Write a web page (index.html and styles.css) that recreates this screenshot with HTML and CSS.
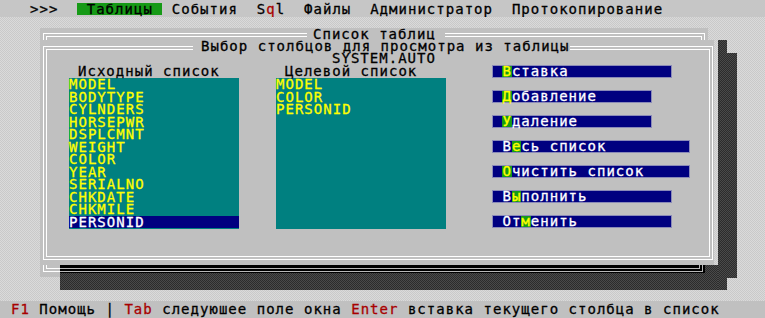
FILE: index.html
```html
<!DOCTYPE html>
<html lang="ru">

<head>
    <meta charset="UTF-8">
    <meta name="viewport" content="width=device-width, initial-scale=1.0">
    <title>Список таблиц</title>
    <link rel="stylesheet" href="styles.css">
</head>

<body>

    <div class="screen">
        <div class="menubar">&gt;&gt;&gt;  <span class="menu-active"> Таблицы </span> События  S<span class="key">q</span>l  Файлы  Администратор  Протокопирование</div>

        <div class="desk">
            <!-- back window -->
            <div class="win win-back">
                <span class="win-title title-back">Список таблиц</span>
            </div>

            <!-- shadows -->
            <div class="shade shade-back-right"></div>
            <div class="shade shade-front-right"></div>
            <div class="shade shade-bottom"></div>
            <div class="shade-black"></div>

            <!-- front window -->
            <div class="win win-front">
                <span class="win-title title-front">Выбор столбцов для просмотра из таблицы</span>
                <div class="table-name">SYSTEM.AUTO</div>

                <div class="win-body">
                    <div class="lists">
                        <div class="list-col">
                            <div class="list-label">Исходный список</div>
                            <ul class="list-box">
                                <li>MODEL</li>
                                <li>BODYTYPE</li>
                                <li>CYLNDERS</li>
                                <li>HORSEPWR</li>
                                <li>DSPLCMNT</li>
                                <li>WEIGHT</li>
                                <li>COLOR</li>
                                <li>YEAR</li>
                                <li>SERIALNO</li>
                                <li>CHKDATE</li>
                                <li>CHKMILE</li>
                                <li class="selected">PERSONID</li>
                            </ul>
                        </div>
                        <div class="list-col">
                            <div class="list-label">Целевой список</div>
                            <ul class="list-box">
                                <li>MODEL</li>
                                <li>COLOR</li>
                                <li>PERSONID</li>
                            </ul>
                        </div>
                    </div>

                    <div class="buttons">
                        <div class="btn w19"> <span class="hot">В</span>ставка</div>
                        <div class="btn w17"> <span class="hot">Д</span>обавление</div>
                        <div class="btn w17"> <span class="hot">У</span>даление</div>
                        <div class="btn w21"> В<span class="hot">е</span>сь список</div>
                        <div class="btn w21"> <span class="hot">О</span>чистить список</div>
                        <div class="btn w19"> В<span class="hot">ы</span>полнить</div>
                        <div class="btn w19"> От<span class="hot">м</span>енить</div>
                    </div>
                </div>
            </div>
        </div>

        <div class="statusbar"><span class="key">F1</span> Помощь | <span class="key">Tab</span> следуюшее поле окна <span class="key">Enter</span> вставка текущего столбца в список</div>
    </div>

</body>

</html>
```

FILE: styles.css
```css
* {
    box-sizing: border-box;
}

body {
    margin: 0;
    background: #c0c0c0;
}

.screen {
    width: 765px;
    height: 318px;
    display: flex;
    flex-direction: column;
    overflow: hidden;
    font-family: "DejaVu Sans Mono", monospace;
    font-size: 14px;
    line-height: 12px;
    letter-spacing: 1.02px; /* one text cell = 9.45px */
    -webkit-text-stroke: 0.3px currentColor; /* bitmap font is a bit heavier */
    color: #000;
}

.key {
    color: #a80000;
}

/* top menu */
.menubar {
    flex: none;
    height: 17px;
    padding: 3px 0 0 30px;
    background: #c6c6c6;
    white-space: pre;
}

.menu-active {
    display: inline-block;
    height: 12px;
    background: #169a16;
}

/* desktop with the windows */
.desk {
    flex: 1;
    position: relative;
    background: repeating-conic-gradient(#c9c9c9 0 25%, #dadada 0 50%) 0 0 / 2px 2px;
}

.win {
    position: absolute;
    background: #c0c0c0;
}

.win::before {
    content: "";
    position: absolute;
    border: 4px double #fff;
}

.win-title {
    position: absolute;
    top: 0;
    background: #c0c0c0;
    white-space: pre;
    z-index: 1;
}

.win-back {
    left: 40px;
    top: 11px;
    width: 668px;
    height: 249px;
}

.win-back::before {
    top: 5px;
    left: 3px;
    right: 3px;
    bottom: 5px;
}

.title-back {
    left: 267px;
    padding: 0 9px 0 6px;
}

.shade {
    position: absolute;
    background: repeating-conic-gradient(#2c2c2c 0 25%, #4a4a4a 0 50%) 0 0 / 2px 2px;
}

.shade-back-right {
    left: 718px;
    top: 23px;
    width: 9px;
    height: 250px;
}

.shade-front-right {
    left: 727px;
    top: 36px;
    width: 10px;
    height: 225px;
}

.shade-bottom {
    left: 60px;
    top: 248px;
    width: 658px;
    height: 25px;
}

.shade-black {
    position: absolute;
    left: 60px;
    top: 248px;
    width: 645px;
    height: 8px;
    background: #000;
}

.shade-black::after {
    content: "";
    position: absolute;
    left: 0;
    right: 2px;
    top: -12px;
    bottom: 1px;
    border-right: 4px double #b8b8b8;
    border-bottom: 4px double #b8b8b8;
}

.win-front {
    left: 40px;
    top: 23px;
    width: 674px;
    height: 225px;
    padding: 12px 0 0 29px;
}

.win-front::before {
    top: 6px;
    left: 3px;
    right: 1px;
    bottom: 5px;
}

.title-front {
    left: 153px;
    padding-left: 8px;
}

.table-name {
    padding-left: 263px;
}

.win-body {
    display: flex;
    margin-top: 1px;
}

.lists {
    display: flex;
    gap: 37px;
}

.list-col {
    width: 170px;
}

.list-label {
    line-height: 13px;
    padding-left: 9px;
    white-space: pre;
}

.list-box {
    list-style: none;
    margin: 0;
    padding: 0;
    height: 151px;
    background: #008080;
    color: #ffff00;
    line-height: 12.5px;
}

.list-box .selected {
    background: #000080;
    color: #fff;
}

/* command buttons */
.buttons {
    display: flex;
    flex-direction: column;
    gap: 12px;
    margin-left: 46px;
}

.btn {
    height: 13px;
    line-height: 11px;
    background: #000080;
    border: 1px solid #8a8ab8;
    color: #fff;
    white-space: pre;
}

.w17 {
    width: 160px;
}

.w19 {
    width: 180px;
}

.w21 {
    width: 198px;
}

.hot {
    display: inline-block;
    height: 11px;
    background: #169a16;
    color: #ffff00;
}

/* bottom hint line */
.statusbar {
    flex: none;
    height: 17px;
    padding: 2px 0 0 11px;
    background: #c0c0c0;
    white-space: pre;
}
```
